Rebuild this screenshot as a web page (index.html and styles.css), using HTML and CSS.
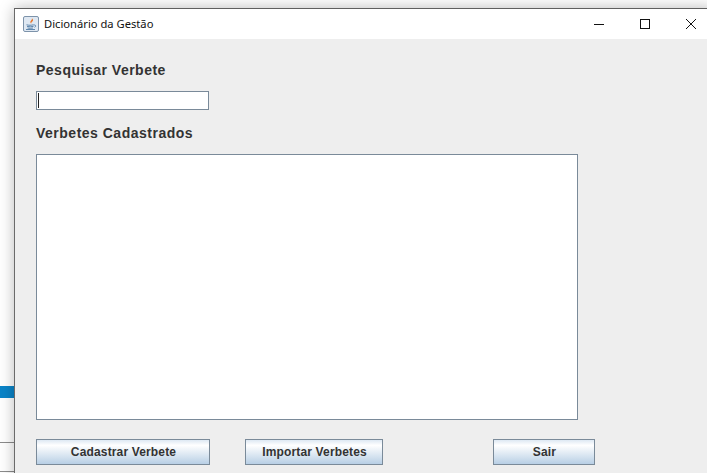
FILE: index.html
```html
<!DOCTYPE html>
<html lang="pt">
<head>
<meta charset="utf-8">
<title>Dicionário da Gestão</title>
<link rel="stylesheet" href="styles.css">
</head>
<body>
<div class="desktop">
  <div class="desk-blue"></div>
  <div class="desk-line desk-line-a"></div>
  <div class="desk-line desk-line-b"></div>
  <div class="window">
    <header class="titlebar">
      <svg class="app-icon" width="16" height="16" viewBox="0 0 16 16" aria-hidden="true">
        <rect x="0.5" y="0.5" width="15" height="15" rx="1.5" fill="#dfe8f2" stroke="#7d93aa"/>
        <path d="M8.8 2.2c1 1.6-2 2.6-1.4 4.4.2.6.6 1 .9 1.3-.9-1.7 2.6-2.6 1.6-4.4-.2-.5-.6-.9-1.1-1.3z" fill="#e8762b"/>
        <path d="M3.5 8.8c2 .6 5 .6 7 0M4 10.4c2 .5 4.6.5 6.5 0M4.5 12c1.7.4 3.7.4 5.5 0" fill="none" stroke="#5f87ad"/>
        <path d="M10.5 9h1.200c1.300 0 1.300 2-.2 2.300" fill="none" stroke="#5f87ad"/>
        <path d="M3 13.500h9" stroke="#5f87ad"/>
      </svg>
      <span class="title">Dicionário da Gestão</span>
      <div class="controls">
        <span class="ctl"><svg width="10" height="10" viewBox="0 0 10 10" aria-hidden="true"><path d="M0 5.5h10" stroke="#111"/></svg></span>
        <span class="ctl"><svg width="10" height="10" viewBox="0 0 10 10" aria-hidden="true"><rect x="0.5" y="0.5" width="9" height="9" fill="none" stroke="#111"/></svg></span>
        <span class="ctl"><svg width="10" height="10" viewBox="0 0 10 10" aria-hidden="true"><path d="M0 0l10 10M10 0L0 10" stroke="#111" stroke-width="1"/></svg></span>
      </div>
    </header>
    <main class="content">
      <h2 class="label label-search">Pesquisar Verbete</h2>
      <div class="field"><span class="caret"></span></div>
      <h2 class="label label-list">Verbetes Cadastrados</h2>
      <div class="listbox"></div>
      <div class="actions">
        <button class="btn btn-add" type="button">Cadastrar Verbete</button>
        <button class="btn btn-import" type="button">Importar Verbetes</button>
        <button class="btn btn-exit" type="button">Sair</button>
      </div>
    </main>
  </div>
</div>
</body>
</html>
```
FILE: styles.css
```css
html, body {
  margin: 0;
  height: 100%;
  overflow: hidden;
}
.desktop {
  position: relative;
  width: 707px;
  height: 473px;
  overflow: hidden;
  background: #fff;
}
.desk-blue {
  position: absolute;
  left: 0;
  top: 386px;
  width: 14px;
  height: 12px;
  background: #0a84c8;
}
.desk-line {
  position: absolute;
  left: 0;
  width: 14px;
  height: 1px;
  background: #8c8c8c;
}
.desk-line-a { top: 442px; }
.desk-line-b { top: 471px; }
.window {
  position: absolute;
  left: 14px;
  top: 8px;
  width: 700px;
  height: 480px;
  box-sizing: border-box;
  border-left: 1px solid #6a6a6a;
  border-top: 1px solid #5f5f5f;
  box-shadow: 0 0 14px rgba(0, 0, 0, 0.28);
  background: #eeeeee;
  display: flex;
  flex-direction: column;
}
.titlebar {
  height: 30px;
  flex: none;
  background: #fff;
  display: flex;
  align-items: center;
  padding-left: 8px;
  box-sizing: border-box;
}
.app-icon { flex: none; }
.title {
  margin-left: 5px;
  margin-bottom: 2px;
  font: 11.2px "Noto Sans", "Liberation Sans", sans-serif;
  white-space: nowrap;
  color: #111;
}
.controls {
  display: flex;
  margin-left: auto;
}
.ctl {
  width: 46px;
  height: 30px;
  display: flex;
  align-items: center;
  justify-content: center;
}
.content {
  flex: 1;
  padding-left: 21px;
  display: flex;
  flex-direction: column;
  align-items: flex-start;
}
.label {
  margin: 0;
  font: bold 14px/16px "Liberation Sans", Arial, sans-serif;
  letter-spacing: 0.5px;
  color: #333;
}
.label-search { margin-top: 23px; }
.label-list { margin-top: 15px; }
.field {
  width: 173px;
  height: 19px;
  margin-top: 13px;
  box-sizing: border-box;
  border: 1px solid #7a8a99;
  background: #fff;
  display: flex;
  align-items: center;
  padding-left: 1px;
}
.caret {
  width: 1px;
  height: 15px;
  background: #222;
}
.listbox {
  width: 542px;
  height: 266px;
  margin-top: 13px;
  box-sizing: border-box;
  border: 1px solid #7a8a99;
  background: #fff;
}
.actions {
  display: flex;
  margin-top: 19px;
}
.btn {
  height: 26px;
  padding: 0 0 0 1px;
  box-sizing: border-box;
  border: 1px solid #7a8a99;
  background: linear-gradient(#dde8f3 0%, #ffffff 22%, #b8cfe5 100%);
  font: bold 12px "Liberation Sans", Arial, sans-serif;
  letter-spacing: 0.15px;
  color: #333;
}
.btn-add { width: 174px; }
.btn-import { width: 138px; margin-left: 35px; }
.btn-exit { width: 102px; margin-left: 110px; }
```
